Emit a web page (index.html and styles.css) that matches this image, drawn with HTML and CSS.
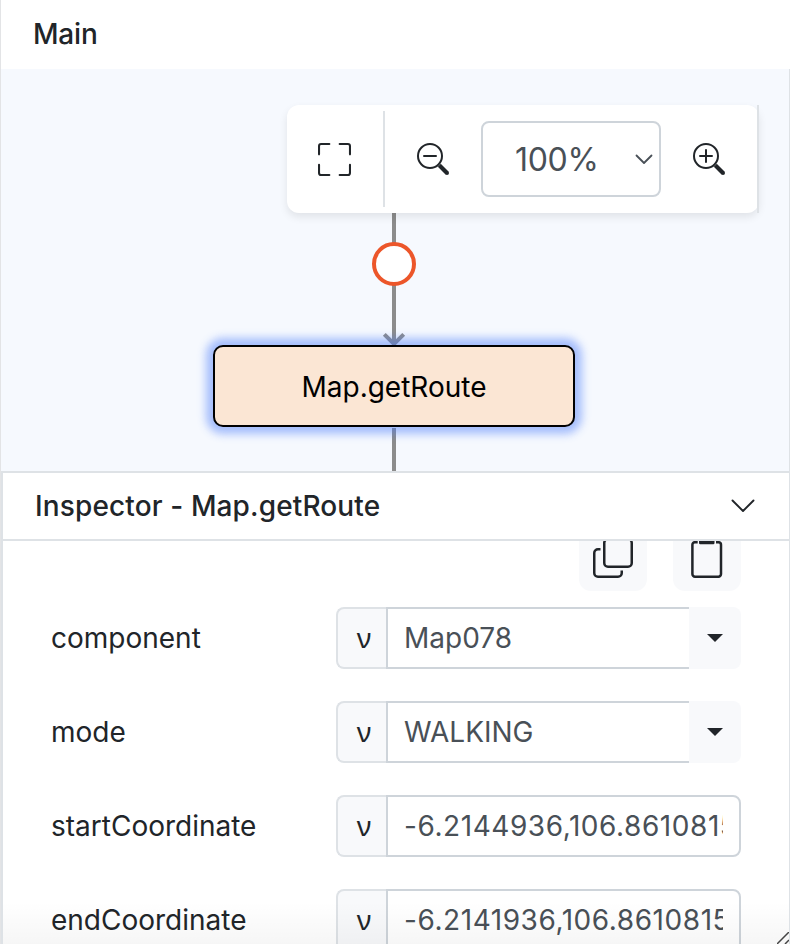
FILE: index.html
```html
<!DOCTYPE html>
<html lang="en">
<head>
<meta charset="utf-8">
<title>Main</title>
<link rel="stylesheet" href="styles.css">
</head>
<body>
<div class="app">
  <header class="main-header">Main</header>
  <main class="canvas">
    <svg class="edges" width="788" height="402" viewBox="1 69 788 402">
      <path d="M394 205V345M394 428V471" fill="none" stroke="#8c8c8c" stroke-width="4"/>
      <path d="M384.300 334.300L394 344L403.700 334.300" fill="none" stroke="#8c8c8c" stroke-width="4"/>
      <circle cx="394" cy="264" r="20" fill="#fff" stroke="#ec562a" stroke-width="4"/>
    </svg>
    <div class="node">Map.getRoute</div>
    <div class="toolbar">
      <button class="tool fit" aria-label="Fit">
        <svg width="33" height="33" viewBox="0 0 16 16"><path fill="currentColor" d="M1.500 1a.5.5 0 0 0-.5.5v4a.5.5 0 0 1-1 0v-4A1.500 1.500 0 0 1 1.500 0h4a.5.5 0 0 1 0 1zM10 .5a.5.5 0 0 1 .5-.5h4A1.500 1.500 0 0 1 16 1.500v4a.5.5 0 0 1-1 0v-4a.5.5 0 0 0-.5-.5h-4a.5.5 0 0 1-.5-.5M.5 10a.5.5 0 0 1 .5.5v4a.5.5 0 0 0 .5.5h4a.5.5 0 0 1 0 1h-4A1.500 1.500 0 0 1 0 14.500v-4a.5.5 0 0 1 .5-.5m15 0a.5.5 0 0 1 .5.5v4a1.500 1.500 0 0 1-1.500 1.500h-4a.5.5 0 0 1 0-1h4a.5.5 0 0 0 .5-.5v-4a.5.5 0 0 1 .5-.5"/></svg>
      </button>
      <button class="tool zoom-out" aria-label="Zoom out">
        <svg width="32" height="32" viewBox="0 0 32 32"><circle cx="13" cy="13" r="12" fill="none" stroke="currentColor" stroke-width="2"/><path d="M7 13h12" stroke="currentColor" stroke-width="2" stroke-linecap="round"/><path d="M22.300 22.300L30 30" stroke="currentColor" stroke-width="4.200"/><circle cx="30" cy="30" r="2" fill="currentColor"/></svg>
      </button>
      <div class="zoom-select"><span>100%</span>
        <svg width="18" height="12" viewBox="0 0 18 12"><path d="M1.500 1.500L9 9L16.500 1.500" fill="none" stroke="currentColor" stroke-width="1.800" stroke-linecap="round" stroke-linejoin="round"/></svg>
      </div>
      <button class="tool zoom-in" aria-label="Zoom in">
        <svg width="32" height="32" viewBox="0 0 32 32"><circle cx="13" cy="13" r="12" fill="none" stroke="currentColor" stroke-width="2"/><path d="M7 13h12M13 7v12" stroke="currentColor" stroke-width="2" stroke-linecap="round"/><path d="M22.300 22.300L30 30" stroke="currentColor" stroke-width="4.200"/><circle cx="30" cy="30" r="2" fill="currentColor"/></svg>
      </button>
    </div>
  </main>
  <section class="inspector">
    <header class="inspector-header"><span>Inspector - Map.getRoute</span>
      <svg width="26" height="16" viewBox="0 0 26 16"><path d="M2.500 2.500L13 13L23.500 2.500" fill="none" stroke="currentColor" stroke-width="1.900" stroke-linecap="round" stroke-linejoin="round"/></svg>
    </header>
    <div class="inspector-body">
      <div class="actions">
        <button class="action" aria-label="Copy">
          <svg width="40" height="40" viewBox="0 0 16 16"><path fill="currentColor" d="M4 2a2 2 0 0 1 2-2h8a2 2 0 0 1 2 2v8a2 2 0 0 1-2 2H6a2 2 0 0 1-2-2zm2-1a1 1 0 0 0-1 1v8a1 1 0 0 0 1 1h8a1 1 0 0 0 1-1V2a1 1 0 0 0-1-1zM2 5a1 1 0 0 0-1 1v8a1 1 0 0 0 1 1h8a1 1 0 0 0 1-1v-1h1v1a2 2 0 0 1-2 2H2a2 2 0 0 1-2-2V6a2 2 0 0 1 2-2h1v1z"/></svg>
        </button>
        <button class="action" aria-label="Paste">
          <svg width="40" height="40" viewBox="0 0 40 40"><path d="M10.700 4.200H8a2.600 2.600 0 0 0-2.600 2.600V36A2.600 2.600 0 0 0 8 38.700H31.400A2.600 2.600 0 0 0 34 36V6.800A2.600 2.600 0 0 0 31.400 4.200H29" fill="none" stroke="currentColor" stroke-width="2.500"/><rect x="12" y="0" width="15.500" height="6.200" rx="1.200" fill="currentColor"/></svg>
        </button>
      </div>
      <div class="row"><label>component</label><div class="field"><span class="addon">ν</span><div class="value combo">Map078</div><span class="drop"><i></i></span></div></div>
      <div class="row"><label>mode</label><div class="field"><span class="addon">ν</span><div class="value combo">WALKING</div><span class="drop"><i></i></span></div></div>
      <div class="row"><label>startCoordinate</label><div class="field"><span class="addon">ν</span><div class="value"><span>-6.2144936,106.8610815</span></div></div></div>
      <div class="row"><label>endCoordinate</label><div class="field"><span class="addon">ν</span><div class="value"><span>-6.2141936,106.8610815</span></div></div></div>
    </div>
    <div class="fade"></div>
    <svg class="grip" width="12" height="12" viewBox="0 0 12 12"><path d="M0 12L12 0M8 12L12 8" stroke="#444" stroke-width="1.500"/></svg>
  </section>
</div>
</body>
</html>
```

FILE: styles.css
```css
* { box-sizing: border-box; }
body {
  margin: 0;
  font-family: Inter, "Liberation Sans", sans-serif;
  font-size: 28px;
  color: #212529;
  background: #fff;
}
button { border: 0; padding: 0; background: none; color: inherit; font: inherit; }
svg { display: block; flex: none; }
.app {
  width: 790px;
  height: 944px;
  overflow: hidden;
  display: flex;
  flex-direction: column;
  border-left: 1px solid #e3e4e6;
}
.main-header {
  flex: none;
  height: 69px;
  padding-left: 32px;
  line-height: 69px;
  font-weight: 500;
  letter-spacing: -.2px;
}
.canvas {
  position: relative;
  flex: none;
  height: 402px;
  overflow: hidden;
  background: #f6f9fe;
  border-right: 1px solid #dee2e6;
}
.edges { position: absolute; left: 0; top: 0; }
.node {
  position: absolute;
  left: 212px;
  top: 276px;
  width: 362px;
  height: 82px;
  line-height: 80px;
  text-align: center;
  color: #000;
  background: #fbe6d4;
  border: 2px solid #000;
  border-radius: 10px;
  box-shadow: 0 0 9px 7px rgba(70, 120, 250, .46);
}
.toolbar {
  position: absolute;
  left: 286px;
  top: 36px;
  width: 472px;
  height: 108px;
  display: flex;
  align-items: center;
  background: #fff;
  border-radius: 12px;
  box-shadow: 0 4px 8px rgba(0, 0, 0, .09);
}
.toolbar::after {
  content: "";
  position: absolute;
  right: 0;
  top: 0;
  width: 2px;
  height: 108px;
  background: #dee2e6;
}
.tool { display: flex; align-items: center; justify-content: center; }
.fit { width: 98px; height: 96px; padding-right: 1px; border-right: 2px solid #dee2e6; }
.zoom-out { width: 96px; }
.zoom-in { width: 96px; }
.zoom-select {
  display: flex;
  align-items: center;
  justify-content: space-between;
  width: 180px;
  height: 76px;
  padding: 1px 6px 0 32px;
  border: 2px solid #ced4da;
  border-radius: 8px;
  font-size: 32px;
  letter-spacing: -.3px;
  color: #495057;
}
.inspector {
  position: relative;
  flex: 1;
  min-height: 0;
  display: flex;
  flex-direction: column;
  border-top: 2px solid #dee2e6;
  border-left: 2px solid #dee2e6;
  border-right: 1px solid #dee2e6;
}
.inspector-header {
  flex: none;
  display: flex;
  align-items: center;
  justify-content: space-between;
  height: 68px;
  padding: 0 33px 0 32px;
  border-bottom: 2px solid #dee2e6;
  font-weight: 500;
  letter-spacing: .13px;
}
.inspector-body {
  flex: 1;
  min-height: 0;
  overflow: hidden;
  padding: 0 48px;
}
.actions {
  display: flex;
  justify-content: flex-end;
  gap: 26px;
  margin: -18px 0 16px;
}
.action {
  display: flex;
  align-items: center;
  justify-content: center;
  width: 68px;
  height: 68px;
  background: #f8f9fb;
  border-radius: 12px;
}
.action svg { margin-top: 2px; }
.row { display: flex; justify-content: space-between; align-items: center; height: 62px; margin-bottom: 32px; }
.field { display: flex; width: 405px; height: 62px; }
.addon {
  flex: none;
  width: 50px;
  padding-left: 4px;
  line-height: 56px;
  font-family: "Noto Sans", sans-serif;
  text-align: center;
  background: #f8f9fb;
  border: 2px solid #dee2e6;
  border-right: 0;
  border-radius: 8px 0 0 8px;
}
.value {
  flex: 1;
  min-width: 0;
  padding: 0 16px;
  line-height: 58px;
  color: #495057;
  border: 2px solid #ced4da;
  border-radius: 0 8px 8px 0;
}
.value span { display: block; overflow: hidden; white-space: nowrap; letter-spacing: .56px; }
.combo { border-right: 0; border-radius: 0; }
.drop {
  flex: none;
  display: flex;
  align-items: center;
  justify-content: center;
  width: 52px;
  background: #f8f9fb;
  border-radius: 0 8px 8px 0;
}
.drop i { border: 8px solid transparent; border-top-color: #212529; border-bottom: 0; }
.fade {
  position: absolute;
  left: 0;
  right: 0;
  bottom: 0;
  height: 42px;
  background: linear-gradient(rgba(0, 0, 0, 0), rgba(0, 0, 0, .035));
}
.grip { position: absolute; right: 0; bottom: 0; }
```
